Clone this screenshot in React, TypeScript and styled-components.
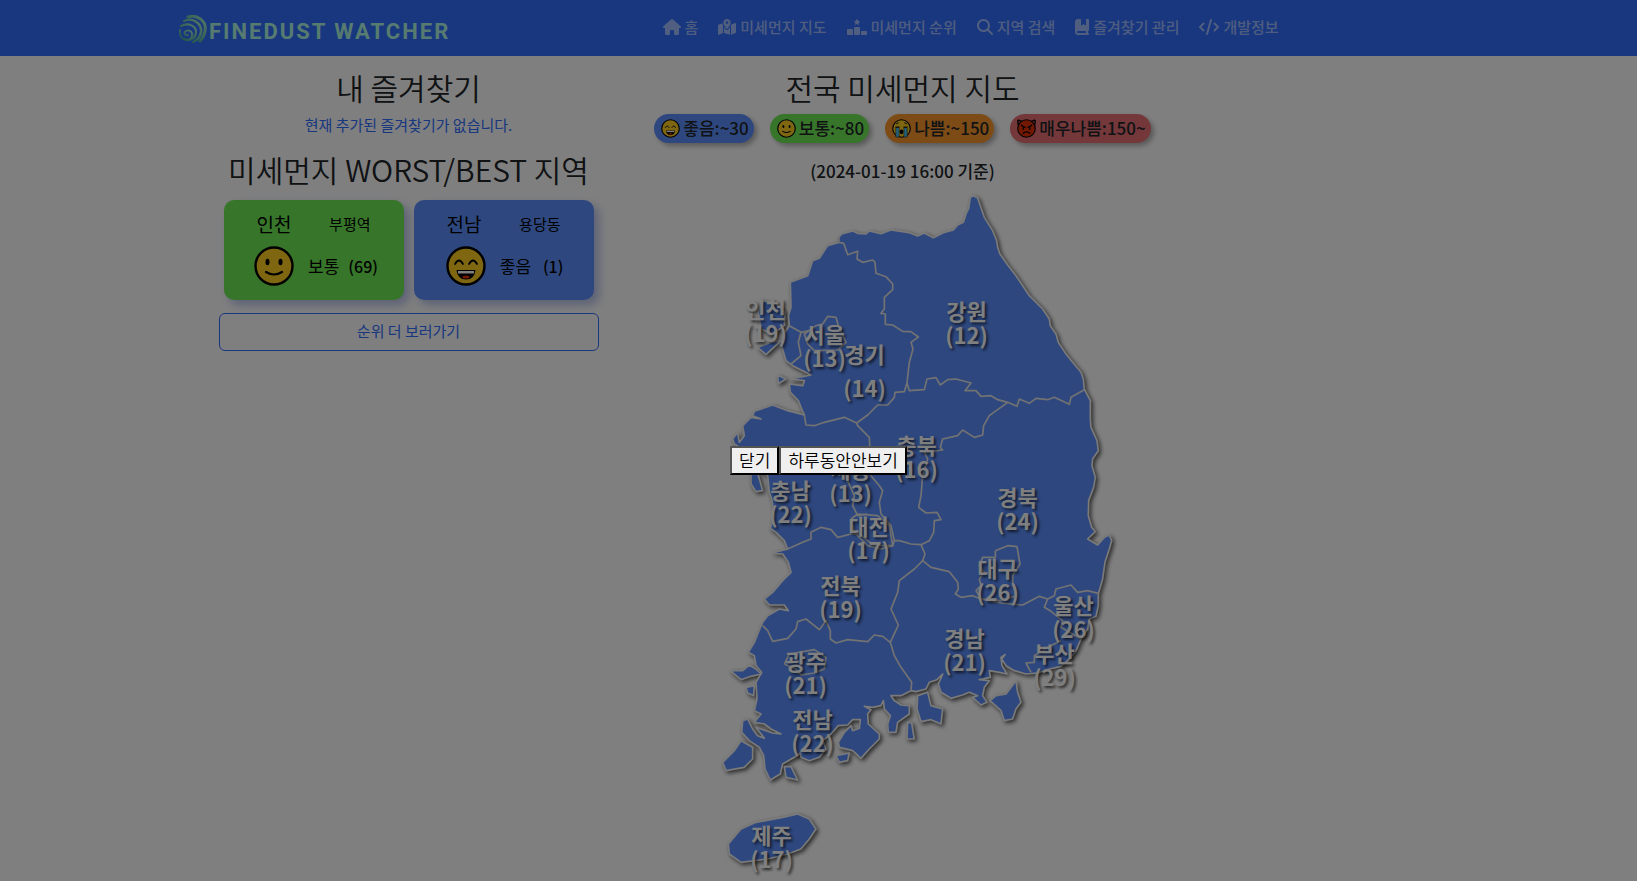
import React from "react";
import styled, { createGlobalStyle } from "styled-components";
import {
  FaBookBookmark,
  FaCode,
  FaHouse,
  FaMagnifyingGlass,
  FaMapLocationDot,
  FaRankingStar,
} from "react-icons/fa6";

const colors = {
  good: "#5c90ff",
  normal: "#6eec54",
  bad: "#fa962c",
  worst: "#e87074",
  primary: "#306eff",
  ink: "#212529",
};

const GlobalStyle = createGlobalStyle`
  *, *::before, *::after { box-sizing: border-box; }
  body {
    margin: 0;
    background: #fff;
    color: ${colors.ink};
    font: 400 16px/24px "Noto Sans CJK KR", sans-serif;
    overflow: hidden;
  }
  h2, p, ul { margin: 0; padding: 0; }
  a { text-decoration: none; }
`;

const NavBar = styled.header`
  background: ${colors.primary};
`;

const Container = styled.div`
  max-width: 1320px;
  margin: 0 auto;
`;

const NavInner = styled(Container)`
  height: 56px;
  display: flex;
  align-items: center;
  padding: 0 20px;
`;

const Brand = styled.a`
  display: flex;
  width: 484px;
  padding-top: 4px;
`;

const NavList = styled.ul`
  display: flex;
  gap: 20px;
  list-style: none;
  padding-bottom: 2px;
`;

const NavLink = styled.a<{ $iconWidth: number }>`
  display: flex;
  align-items: center;
  gap: 4px;
  font-size: 15px;
  font-weight: 500;
  white-space: nowrap;
  color: rgba(255, 255, 255, 0.55);

  svg {
    flex: none;
    width: ${(p) => p.$iconWidth}px;
    height: 16px;
  }
`;

const Main = styled(Container)`
  display: grid;
  grid-template-columns: 380px 608px;
  padding: 11px 0 0 60px;
`;

const Column = styled.section`
  text-align: center;
`;

const Title = styled.h2`
  font-size: 30px;
  font-weight: 350;
  line-height: 40px;
  color: ${colors.ink};
`;

const Notice = styled.p`
  font-size: 15px;
  line-height: 24px;
  padding: 6px 0 12px;
  color: ${colors.primary};
`;

const Cards = styled.div`
  display: grid;
  grid-template-columns: 1fr 1fr;
  gap: 10px;
  padding: 11px 5px 13px;
`;

const Card = styled.article<{ $bg: string }>`
  height: 100px;
  border-radius: 10px;
  background: ${(p) => p.$bg};
  box-shadow: 5px 5px 10px rgba(48, 80, 200, 0.35);
  color: #000;
  padding-top: 11px;
`;

const CardHead = styled.div`
  display: flex;
  align-items: center;
  justify-content: space-between;
  padding: 0 33px;
  line-height: 26px;
`;

const Region = styled.span`
  font-size: 19px;
`;

const Station = styled.span`
  font-size: 15px;
`;

const CardBody = styled.div`
  display: flex;
  align-items: center;
  justify-content: center;
  padding: 9px 0 0 5px;
`;

const Grade = styled.span`
  font-size: 17px;
  padding: 0 9px 0 14px;
`;

const Value = styled.span`
  min-width: 26px;
  font-weight: 500;
`;

const MoreButton = styled.button`
  width: 100%;
  height: 38px;
  padding: 0 0 2px;
  border: 1px solid ${colors.primary};
  border-radius: 6px;
  background: transparent;
  color: ${colors.primary};
  font: inherit;
  font-size: 15px;
`;

const Legend = styled.ul`
  display: flex;
  justify-content: center;
  gap: 16px;
  list-style: none;
  padding-top: 7px;
`;

const Pill = styled.li<{ $bg: string }>`
  display: flex;
  align-items: center;
  gap: 3px;
  height: 29px;
  padding: 0 5px 2px 7px;
  border-radius: 15px;
  background: ${(p) => p.$bg};
  box-shadow: 3px 3px 5px rgba(0, 0, 0, 0.3);
  font-size: 17px;
  font-weight: 500;
  white-space: nowrap;

  svg { margin-top: 2px; }
`;

const Stamp = styled.p`
  font-size: 17px;
  font-weight: 500;
  padding: 16px 0 0;
`;

const MapFrame = styled.div`
  position: relative;
  width: 420px;
  height: 700px;
  margin: -4px auto 0;
  left: 8px;
`;

const Pin = styled.div<{ $tall?: boolean }>`
  position: absolute;
  transform: translate(-50%, -50%);
  color: #fff;
  font-size: 22px;
  font-weight: 700;
  line-height: ${(p) => (p.$tall ? 34 : 24)}px;
  text-shadow: 2px 2px 3px rgba(0, 0, 0, 0.7);
  white-space: pre;
`;

const Overlay = styled.div`
  position: fixed;
  inset: 0;
  display: flex;
  align-items: center;
  justify-content: center;
  padding-top: 39px;
  background: rgba(0, 0, 0, 0.5);
`;

const PopupButton = styled.button`
  height: 29px;
  padding: 0 7px 2px;
  border: 2px outset #000;
  border-radius: 0;
  background: #efefef;
  color: #000;
  font: 350 17px/23px "Noto Sans CJK KR", sans-serif;
`;

type Mood = "good" | "normal" | "bad" | "worst";

function Face({ mood, size }: { mood: Mood; size: number }) {
  return (
    <svg width={size} height={size} viewBox="0 0 40 40" aria-hidden="true">
      {mood === "worst" && (
        <path d="M2 2l10 4M38 2L28 6M2 2q-1 10 3 15M38 2q1 10-3 15" fill="#e63000" stroke="#000" strokeWidth="3" />
      )}
      <circle cx="20" cy="20" r="18.5" fill={mood === "worst" ? "#e63000" : "#fc2"} stroke="#000" strokeWidth="2.4" />
      {mood === "normal" && (
        <g>
          <ellipse cx="13.5" cy="16" rx="2" ry="3.2" />
          <ellipse cx="26.5" cy="16" rx="2" ry="3.2" />
          <path d="M12 26q8 5 16 0" fill="none" stroke="#000" strokeWidth="2.2" strokeLinecap="round" />
        </g>
      )}
      {mood === "good" && (
        <g>
          <path d="M9 18q4-7 8 0M23 18q4-7 8 0" fill="none" stroke="#000" strokeWidth="1.8" strokeLinecap="round" />
          <path d="M10.5 24h19q-1 9.500-9.500 9.500T10.500 24z" />
          <path d="M12 25h16v2.500H12z" fill="#fff" />
          <ellipse cx="20" cy="31" rx="3.5" ry="1.5" fill="#e63000" />
        </g>
      )}
      {mood === "bad" && (
        <g>
          <path d="M8 18h7v20H8zM25 18h7v20h-7z" fill="#4cc3f0" stroke="#000" strokeWidth="1" />
          <path d="M7 17h9M24 17h9M9 10l5-2M31 10l-5-2" stroke="#000" strokeWidth="2" />
          <ellipse cx="20" cy="27" rx="4" ry="5" />
        </g>
      )}
      {mood === "worst" && (
        <path d="M9 13l8 5M31 13l-8 5M13 18v4M27 18v4M13 30q7-6 14 0" fill="none" stroke="#000" strokeWidth="2.5" strokeLinecap="round" />
      )}
    </svg>
  );
}

function Logo() {
  return (
    <svg width="280" height="32" viewBox="0 0 280 32" role="img" aria-label="Finedust Watcher">
      <defs>
        <linearGradient id="swirl" x1="0" y1="1" x2="1" y2="0">
          <stop offset="0" stopColor="#2f9a92" />
          <stop offset="1" stopColor="#a8f0cc" />
        </linearGradient>
      </defs>
      <g fill="none" stroke="url(#swirl)" strokeLinecap="round">
        <path d="M9 3C18 0 28 7 26 17Q25 23 21 27" strokeWidth="3" />
        <path d="M5 7C13 3 23 9 22 18Q21 25 14 28" strokeWidth="2.4" />
        <path d="M2 12C9 8 18 12 17 19C16 25 10 27 6 25" strokeWidth="2.2" />
        <path d="M1 16C0 25 8 29 12 24C15 19 11 15 7 17C4 19 6 22 9 21" strokeWidth="1.8" />
      </g>
      <text x="30" y="25" fill="#aef6e0" fontFamily="Roboto, sans-serif" fontWeight="700" fontSize="22" letterSpacing="2">
        FINEDUST WATCHER
      </text>
    </svg>
  );
}

const mainland =
  "413,175 422,165 455,156 470,163 495,165 505,156 540,164 570,153 600,157 625,161 650,171 670,162 697,176 730,160 757,153 770,138 787,130 795,105 803,88 808,55 818,50 830,57 850,115 875,155 887,185 890,205 897,225 920,258 945,290 985,350 1025,390 1045,420 1048,440 1065,465 1072,490 1095,525 1115,550 1140,580 1147,600 1150,630 1168,665 1168,720 1170,745 1188,785 1192,815 1175,840 1173,860 1183,895 1178,925 1163,965 1162,1010 1172,1045 1183,1058 1160,1080 1190,1098 1210,1075 1225,1068 1232,1085 1225,1110 1212,1150 1205,1200 1192,1245 1192,1280 1185,1312 1165,1320 1160,1350 1140,1380 1125,1415 1105,1440 1080,1462 1045,1470 1010,1482 975,1485 940,1475 915,1460 902,1440 912,1427 900,1435 903,1460 918,1485 895,1480 865,1475 868,1495 835,1502 865,1505 850,1525 845,1550 858,1570 840,1578 815,1555 830,1550 805,1540 785,1548 750,1558 720,1540 712,1515 725,1485 708,1502 685,1510 675,1530 645,1538 630,1535 600,1550 570,1550 580,1565 600,1578 625,1580 625,1605 590,1630 585,1660 562,1660 560,1635 568,1610 550,1590 547,1565 540,1580 515,1585 490,1582 510,1592 500,1605 502,1635 535,1665 535,1680 505,1710 480,1738 455,1715 415,1705 412,1690 430,1660 450,1640 455,1655 475,1648 478,1622 455,1622 440,1638 412,1640 390,1665 365,1685 375,1710 355,1735 325,1745 300,1735 298,1722 280,1735 245,1755 238,1785 208,1803 192,1770 188,1730 175,1705 145,1685 122,1660 125,1625 140,1620 155,1650 170,1670 190,1678 165,1645 195,1655 215,1662 240,1665 210,1650 190,1635 160,1630 180,1605 160,1595 168,1560 165,1510 182,1480 165,1460 160,1430 142,1420 160,1390 178,1345 185,1330 200,1310 235,1290 262,1295 250,1278 205,1278 190,1260 215,1240 245,1205 270,1180 262,1150 245,1125 215,1122 260,1110 250,1085 225,1060 208,1048 220,1010 212,960 205,940 200,890 155,860 140,820 100,795 95,780 110,760 115,790 130,770 125,740 150,715 180,720 155,710 160,697 215,678 260,695 310,708 300,685 292,665 268,640 265,615 305,620 310,605 270,600 330,588 275,560 255,545 242,500 245,470 265,440 262,410 270,385 268,310 320,290 335,245 355,238 380,200 413,190";

const islands = [
  "170,505 210,490 240,485 195,527",
  "180,365 220,370 252,400 250,440 215,465 180,450 172,400",
  "230,588 255,600 232,614",
  "150,880 170,882 185,935 165,938 150,915",
  "120,1685 155,1705 155,1740 130,1765 75,1775 65,1750 100,1715",
  "250,1763 270,1763 290,1803 255,1795",
  "405,1730 445,1722 440,1745 415,1750",
  "88,1475 125,1475 145,1458 165,1470 180,1485 150,1492 120,1502",
  "135,1525 160,1520 158,1550 140,1542",
  "650,1550 680,1540 690,1580 725,1590 720,1635 690,1622 660,1628 648,1590",
  "620,1630 632,1632 640,1680 618,1680",
  "945,1505 950,1540 960,1570 945,1590 935,1620 910,1625 900,1595 867,1565 885,1550 915,1545",
  "120,1950 165,1930 245,1915 290,1905 325,1920 345,1950 325,1980 300,2010 260,2025 200,2040 120,2050 85,2025 82,1995",
];

const borders = [
  "413,175 413,190 428,193 440,227 470,217 468,240 485,250 515,243 522,250 525,283 555,293 575,315 575,332 550,355 550,390 540,403 553,405 553,436 575,438 605,457 630,458 652,474 630,490 636,510 625,550 618,612",
  "618,612 625,635 670,632 678,600 705,596 718,618 740,602 765,600 810,612 792,635 825,635 840,652 870,650 890,662 920,670 948,682 955,660 985,673 1005,658 1040,662 1060,655 1105,676 1110,655 1150,632",
  "618,612 610,638 582,640 580,655 560,678 530,678 500,708 467,732 430,715 370,730 340,740 315,738 310,708",
  "467,732 470,740 505,775 508,840 510,890 535,920 545,935 535,970 540,1005 570,1040 580,1085",
  "920,670 865,710 848,740 845,768 820,775 785,753 770,770 725,780 718,805 725,813 670,820 680,840 665,890 660,950 653,985 675,1002 708,1000 720,1022 700,1025 698,1060 685,1085 660,1097 630,1095 595,1085",
  "260,1110 305,1090 330,1080 330,1060 360,1045 390,1052 410,1075 450,1065 475,1065 500,1085 520,1100 575,1100 580,1085 595,1085",
  "435,850 435,895 460,950 455,980 470,1010 500,1005",
  "450,1020 470,1005 530,1010 565,1040 575,1100 540,1110 500,1100 460,1060 450,1020",
  "660,1097 672,1125 665,1145 640,1170 595,1205 590,1240 570,1290 592,1338 568,1390 580,1430 600,1465 632,1510 630,1535",
  "665,1145 690,1165 745,1178 770,1210 772,1230 763,1245 780,1255 815,1250 840,1260 900,1272 965,1278 1015,1252 1040,1260 1060,1250 1065,1230 1110,1218 1130,1240 1160,1235 1192,1243",
  "1040,1260 1030,1285 1050,1297 1085,1325 1080,1345 1140,1380",
  "1080,1385 1040,1405 1000,1430 1000,1450 975,1452 990,1480",
  "883,1115 920,1100 948,1103 957,1155 935,1190 935,1215 945,1250 900,1265 840,1260 825,1235 840,1220 835,1200 850,1180 835,1160 845,1135 883,1135 883,1115",
  "185,1340 200,1355 215,1387 260,1378 285,1350 290,1328 315,1320 355,1352 375,1325 388,1355 388,1380 405,1392 440,1382 500,1388 520,1368 545,1372 568,1390",
  "250,1455 265,1425 340,1412 375,1435 370,1470 340,1482 300,1488 285,1470 250,1455",
  "365,435 380,412 405,415 412,440 435,490 410,513 340,515 320,495 310,465 345,440 365,435",
  "265,440 300,460 292,490 300,530 270,555",
  "300,460 325,455",
];

const MapSvg = styled.svg`
  display: block;
  filter: drop-shadow(2px 2px 2px rgba(0, 0, 0, 0.65));
`;

function KoreaMap() {
  return (
    <MapSvg width="420" height="700" viewBox="0 0 1260 2100" aria-label="전국 지도">
      <g fill={colors.good} stroke="#f4f4f4" strokeWidth="5" strokeLinejoin="round">
        <polygon points={mainland} />
        {islands.map((p) => (
          <polygon key={p} points={p} />
        ))}
        {borders.map((p) => (
          <polyline key={p} points={p} fill="none" stroke="#e4e4e4" />
        ))}
      </g>
    </MapSvg>
  );
}

const pins = [
  { name: "인천", value: 19, x: 65, y: 141 },
  { name: "서울", value: 13, x: 124, y: 166 },
  { name: "경기", value: 14, x: 164, y: 191, tall: true },
  { name: "강원", value: 12, x: 266, y: 143 },
  { name: "충북", value: 16, x: 216, y: 277 },
  { name: "세종", value: 13, x: 150, y: 301 },
  { name: "충남", value: 22, x: 90, y: 322 },
  { name: "대전", value: 17, x: 168, y: 358 },
  { name: "경북", value: 24, x: 317, y: 329 },
  { name: "대구", value: 26, x: 297, y: 400 },
  { name: "전북", value: 19, x: 140, y: 417 },
  { name: "울산", value: 26, x: 373, y: 437 },
  { name: "경남", value: 21, x: 264, y: 470 },
  { name: "부산", value: 29, x: 354, y: 485 },
  { name: "광주", value: 21, x: 105, y: 493 },
  { name: "전남", value: 22, x: 112, y: 551 },
  { name: "제주", value: 17, x: 71, y: 667 },
];

const menu = [
  { label: "홈", icon: <FaHouse />, width: 18 },
  { label: "미세먼지 지도", icon: <FaMapLocationDot />, width: 18 },
  { label: "미세먼지 순위", icon: <FaRankingStar />, width: 20 },
  { label: "지역 검색", icon: <FaMagnifyingGlass />, width: 16 },
  { label: "즐겨찾기 관리", icon: <FaBookBookmark />, width: 14 },
  { label: "개발정보", icon: <FaCode />, width: 20 },
];

const legend: { mood: Mood; text: string }[] = [
  { mood: "good", text: "좋음:~30" },
  { mood: "normal", text: "보통:~80" },
  { mood: "bad", text: "나쁨:~150" },
  { mood: "worst", text: "매우나쁨:150~" },
];

const ranks: { mood: Mood; region: string; station: string; grade: string; value: number }[] = [
  { mood: "normal", region: "인천", station: "부평역", grade: "보통", value: 69 },
  { mood: "good", region: "전남", station: "용당동", grade: "좋음", value: 1 },
];

export default function App() {
  return (
    <>
      <GlobalStyle />
      <NavBar>
        <NavInner>
          <Brand href="#">
            <Logo />
          </Brand>
          <nav>
            <NavList>
              {menu.map((m) => (
                <li key={m.label}>
                  <NavLink href="#" $iconWidth={m.width}>
                    {m.icon}
                    {m.label}
                  </NavLink>
                </li>
              ))}
            </NavList>
          </nav>
        </NavInner>
      </NavBar>
      <Main as="main">
        <Column>
          <Title>내 즐겨찾기</Title>
          <Notice>현재 추가된 즐겨찾기가 없습니다.</Notice>
          <Title>미세먼지 WORST/BEST 지역</Title>
          <Cards>
            {ranks.map((r) => (
              <Card key={r.region} $bg={colors[r.mood]}>
                <CardHead>
                  <Region>{r.region}</Region>
                  <Station>{r.station}</Station>
                </CardHead>
                <CardBody>
                  <Face mood={r.mood} size={40} />
                  <Grade>{r.grade}</Grade>
                  <Value>({r.value})</Value>
                </CardBody>
              </Card>
            ))}
          </Cards>
          <MoreButton type="button">순위 더 보러가기</MoreButton>
        </Column>
        <Column>
          <Title>전국 미세먼지 지도</Title>
          <Legend>
            {legend.map((l) => (
              <Pill key={l.mood} $bg={colors[l.mood]}>
                <Face mood={l.mood} size={19} />
                {l.text}
              </Pill>
            ))}
          </Legend>
          <Stamp>(2024-01-19 16:00 기준)</Stamp>
          <MapFrame>
            <KoreaMap />
            {pins.map((p) => (
              <Pin key={p.name} $tall={p.tall} style={{ left: p.x, top: p.y }}>
                {`${p.name}\n(${p.value})`}
              </Pin>
            ))}
          </MapFrame>
        </Column>
      </Main>
      <Overlay role="dialog" aria-label="공지">
        <PopupButton type="button">닫기</PopupButton>
        <PopupButton type="button">하루동안안보기</PopupButton>
      </Overlay>
    </>
  );
}
